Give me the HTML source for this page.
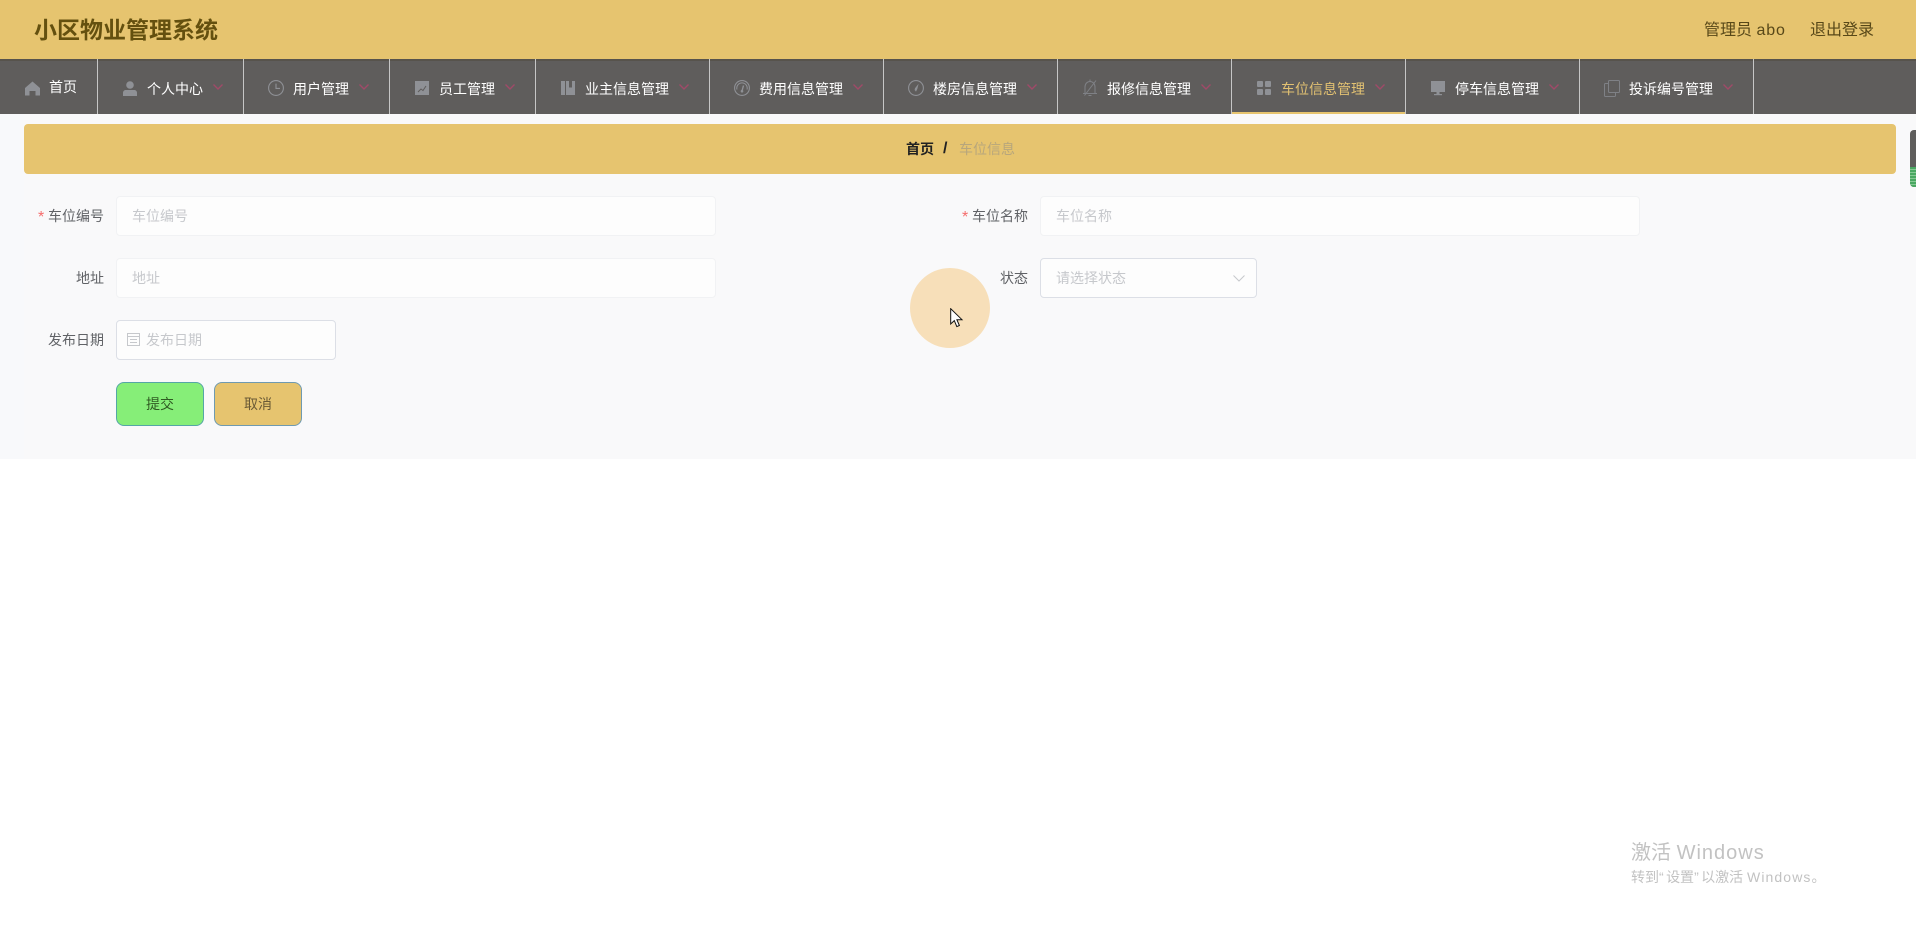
<!DOCTYPE html>
<html lang="zh-CN">
<head>
<meta charset="utf-8">
<title>小区物业管理系统</title>
<style>
html,body{margin:0;padding:0;width:1916px;height:936px;overflow:hidden;background:#fff;}
body{position:relative;font-family:"Liberation Sans","Noto Sans CJK SC",sans-serif;}
.a{position:absolute;white-space:nowrap;}
.t{position:absolute;white-space:nowrap;line-height:20px;height:20px;font-size:14px;}
.sep{position:absolute;top:59px;width:1px;height:55px;background:#c6c6c6;}
.nt{position:absolute;top:79px;white-space:nowrap;font-size:14px;line-height:20px;color:#fff;}
.ic{position:absolute;}
.chev{position:absolute;top:84px;width:10px;height:6px;}
.lab{color:#606266;text-align:right;}
.ph{color:#c6c8cc;}
.box{position:absolute;box-sizing:border-box;background:#fdfdfd;border-radius:4px;}
.star{position:absolute;white-space:nowrap;color:#f56c6c;font-size:16px;line-height:20px;height:20px;}
</style>
</head>
<body>
<!-- page backgrounds -->
<div class="a" style="left:0;top:114px;width:1916px;height:345px;background:#f9f9fa;"></div>
<div class="a" style="left:0;top:114px;width:24px;height:345px;background:#f8f9fb;"></div>

<!-- header -->
<div class="a" style="left:0;top:0;width:1916px;height:59px;background:#e6c46f;"></div>
<div class="a" style="left:34px;top:14px;font-size:23px;line-height:32px;font-weight:bold;color:#64500f;">小区物业管理系统</div>
<div class="a" style="left:1704px;top:20px;font-size:16px;line-height:22px;color:#584818;">管理员 <span style="letter-spacing:.9px">abo</span></div>
<div class="a" style="left:1810px;top:20px;font-size:16px;line-height:22px;color:#584818;">退出登录</div>

<!-- nav -->
<div class="a" style="left:0;top:59px;width:1916px;height:55px;background:#5f5d5c;"></div>
<div class="a" style="left:0;top:59px;width:1916px;height:2px;background:#57534c;"></div>
<div class="a" style="left:1232px;top:112px;width:174px;height:2px;background:#e6c46f;"></div>

<div class="sep" style="left:97px"></div>
<div class="sep" style="left:243px"></div>
<div class="sep" style="left:389px"></div>
<div class="sep" style="left:535px"></div>
<div class="sep" style="left:709px"></div>
<div class="sep" style="left:883px"></div>
<div class="sep" style="left:1057px"></div>
<div class="sep" style="left:1231px"></div>
<div class="sep" style="left:1405px"></div>
<div class="sep" style="left:1579px"></div>
<div class="sep" style="left:1753px"></div>

<!-- home -->
<svg class="ic" style="left:25px;top:81px" width="15" height="15" viewBox="0 0 15 15"><path d="M7.5 0.5L15 7v7.5h-4.500V10h-6v4.500H0V7z" fill="#8f9196"/></svg>
<div class="nt" style="left:49px;top:77px">首页</div>

<!-- user -->
<svg class="ic" style="left:122px;top:81px" width="16" height="15" viewBox="0 0 16 15"><circle cx="8" cy="4" r="3.800" fill="#8f9196"/><path d="M1 15v-3.200C1 10 2.400 9 4 9h8c1.600 0 3 1 3 2.800V15z" fill="#8f9196"/></svg>
<div class="nt" style="left:147px">个人中心</div>
<svg class="chev" style="left:213px" viewBox="0 0 10 6"><path d="M0.500 0.500L5 5l4.500-4.500" fill="none" stroke="#a04a68" stroke-width="1.400"/></svg>

<!-- clock -->
<svg class="ic" style="left:268px;top:80px" width="16" height="16" viewBox="0 0 16 16"><circle cx="8" cy="8" r="7.400" fill="none" stroke="#8f9196" stroke-width="1.100"/><path d="M8 3.600V8.400h4" fill="none" stroke="#8f9196" stroke-width="1.100"/></svg>
<div class="nt" style="left:293px">用户管理</div>
<svg class="chev" style="left:359px" viewBox="0 0 10 6"><path d="M0.500 0.500L5 5l4.500-4.500" fill="none" stroke="#a04a68" stroke-width="1.400"/></svg>

<!-- data line -->
<svg class="ic" style="left:415px;top:81px" width="14" height="14" viewBox="0 0 14 14"><rect width="14" height="14" fill="#8f9196"/><path d="M3 11l3-3 2 1.500L11 5" fill="none" stroke="#5f5d5c" stroke-width="1"/></svg>
<div class="nt" style="left:439px">员工管理</div>
<svg class="chev" style="left:505px" viewBox="0 0 10 6"><path d="M0.500 0.500L5 5l4.500-4.500" fill="none" stroke="#a04a68" stroke-width="1.400"/></svg>

<!-- notebook -->
<svg class="ic" style="left:561px;top:81px" width="14" height="14" viewBox="0 0 14 14"><path d="M0 0h4v14H0zM5 0h3v6.500h3V0h3v14H5z" fill="#8f9196"/></svg>
<div class="nt" style="left:585px">业主信息管理</div>
<svg class="chev" style="left:679px" viewBox="0 0 10 6"><path d="M0.500 0.500L5 5l4.500-4.500" fill="none" stroke="#a04a68" stroke-width="1.400"/></svg>

<!-- gauge -->
<svg class="ic" style="left:734px;top:80px" width="16" height="16" viewBox="0 0 16 16"><circle cx="8" cy="8" r="7.400" fill="none" stroke="#8f9196" stroke-width="1.100"/><path d="M3 9.500A5.200 5.200 0 1 1 13 9.500" fill="none" stroke="#8f9196" stroke-width="1"/><path d="M9.500 5.500L8 11" stroke="#8f9196" stroke-width="1.400"/><circle cx="8" cy="11.200" r="1.300" fill="#8f9196"/></svg>
<div class="nt" style="left:759px">费用信息管理</div>
<svg class="chev" style="left:853px" viewBox="0 0 10 6"><path d="M0.500 0.500L5 5l4.500-4.500" fill="none" stroke="#a04a68" stroke-width="1.400"/></svg>

<!-- compass -->
<svg class="ic" style="left:908px;top:80px" width="16" height="16" viewBox="0 0 16 16"><circle cx="8" cy="8" r="7.400" fill="none" stroke="#8f9196" stroke-width="1.100"/><path d="M10.600 3.800L9.300 9 7 8.200z M7 8.200L9.300 9 8 11.600 6.600 10z" fill="#8f9196"/></svg>
<div class="nt" style="left:933px">楼房信息管理</div>
<svg class="chev" style="left:1027px" viewBox="0 0 10 6"><path d="M0.500 0.500L5 5l4.500-4.500" fill="none" stroke="#a04a68" stroke-width="1.400"/></svg>

<!-- bell off -->
<svg class="ic" style="left:1082px;top:79px" width="16" height="18" viewBox="0 0 16 18"><path d="M1 14.500h14M3 14.500V8c0-3 2-5.500 5-5.500S13 5 13 8v6.500M8 0.500v2M6.500 16.500h3M14 1.500L2.500 16.500" fill="none" stroke="#7f8186" stroke-width="1"/></svg>
<div class="nt" style="left:1107px">报修信息管理</div>
<svg class="chev" style="left:1201px" viewBox="0 0 10 6"><path d="M0.500 0.500L5 5l4.500-4.500" fill="none" stroke="#a04a68" stroke-width="1.400"/></svg>

<!-- menu active -->
<svg class="ic" style="left:1257px;top:81px" width="14" height="14" viewBox="0 0 14 14"><rect width="6" height="6" rx="1" fill="#8f9196"/><rect x="8" width="6" height="6" rx="1" fill="#8f9196"/><rect y="8" width="6" height="6" rx="1" fill="#8f9196"/><rect x="8" y="8" width="6" height="6" rx="1" fill="#8f9196"/></svg>
<div class="nt" style="left:1281px;color:#e2c172">车位信息管理</div>
<svg class="chev" style="left:1375px" viewBox="0 0 10 6"><path d="M0.500 0.500L5 5l4.500-4.500" fill="none" stroke="#a04a68" stroke-width="1.400"/></svg>

<!-- monitor -->
<svg class="ic" style="left:1431px;top:81px" width="14" height="15" viewBox="0 0 14 15"><rect width="14" height="11" fill="#8f9196"/><rect x="5.500" y="11" width="3" height="2" fill="#8f9196"/><rect x="3" y="13" width="8" height="1.200" fill="#8f9196"/></svg>
<div class="nt" style="left:1455px">停车信息管理</div>
<svg class="chev" style="left:1549px" viewBox="0 0 10 6"><path d="M0.500 0.500L5 5l4.500-4.500" fill="none" stroke="#a04a68" stroke-width="1.400"/></svg>

<!-- copy -->
<svg class="ic" style="left:1604px;top:80px" width="16" height="17" viewBox="0 0 16 17"><rect x="4.500" y="0.500" width="11" height="12" rx="1" fill="none" stroke="#7f8186" stroke-width="1"/><path d="M4.500 3.500H1.500a1 1 0 0 0-1 1V15.500a1 1 0 0 0 1 1h9a1 1 0 0 0 1-1V12.500" fill="none" stroke="#7f8186" stroke-width="1"/></svg>
<div class="nt" style="left:1629px">投诉编号管理</div>
<svg class="chev" style="left:1723px" viewBox="0 0 10 6"><path d="M0.500 0.500L5 5l4.500-4.500" fill="none" stroke="#a04a68" stroke-width="1.400"/></svg>

<!-- breadcrumb -->
<div class="a" style="left:24px;top:124px;width:1872px;height:50px;background:#e6c46f;border-radius:4px;"></div>
<div class="t" style="left:906px;top:139px;font-weight:bold;color:#222;">首页</div>
<div class="t" style="left:943px;top:139px;font-weight:bold;font-size:16px;color:#222;">/</div>
<div class="t" style="left:959px;top:139px;color:#b7a67c;">车位信息</div>

<!-- side widget -->
<div class="a" style="left:1910px;top:130px;width:6px;height:57px;border-radius:4px 0 0 4px;overflow:hidden;background:#5f5e5d;"><div style="position:absolute;left:0;top:37px;width:6px;height:20px;background:repeating-linear-gradient(#4aa862 0 2px,#86c994 2px 3px);"></div></div>

<!-- row 1 -->
<div class="star" style="left:38px;top:208px;">*</div>
<div class="t lab" style="left:48px;top:206px;">车位编号</div>
<div class="box" style="left:116px;top:196px;width:600px;height:40px;border:1px solid #f1f2f4;"></div>
<div class="t ph" style="left:132px;top:206px;">车位编号</div>

<div class="star" style="left:962px;top:208px;">*</div>
<div class="t lab" style="left:972px;top:206px;">车位名称</div>
<div class="box" style="left:1040px;top:196px;width:600px;height:40px;border:1px solid #f1f2f4;"></div>
<div class="t ph" style="left:1056px;top:206px;">车位名称</div>

<!-- row 2 -->
<div class="t lab" style="left:76px;top:268px;">地址</div>
<div class="box" style="left:116px;top:258px;width:600px;height:40px;border:1px solid #f1f2f4;"></div>
<div class="t ph" style="left:132px;top:268px;">地址</div>

<div class="t lab" style="left:1000px;top:268px;">状态</div>
<div class="box" style="left:1040px;top:258px;width:217px;height:40px;border:1px solid #dcdfe6;"></div>
<div class="t ph" style="left:1056px;top:268px;">请选择状态</div>
<svg class="ic" style="left:1233px;top:275px" width="12" height="7" viewBox="0 0 12 7"><path d="M0.500 0.500L6 6l5.500-5.500" fill="none" stroke="#c6c8cc" stroke-width="1"/></svg>

<!-- row 3 -->
<div class="t lab" style="left:48px;top:330px;">发布日期</div>
<div class="box" style="left:116px;top:320px;width:220px;height:40px;border:1px solid #dcdfe6;"></div>
<svg class="ic" style="left:127px;top:333px" width="13" height="13" viewBox="0 0 13 13"><rect x="0.500" y="0.500" width="12" height="12" fill="none" stroke="#c6c8cc" stroke-width="1"/><path d="M0.500 3.500h12M3 6.500h7M3 9.500h7" fill="none" stroke="#c6c8cc" stroke-width="1"/></svg>
<div class="t ph" style="left:146px;top:330px;">发布日期</div>

<!-- buttons -->
<div class="a" style="left:116px;top:382px;width:88px;height:44px;box-sizing:border-box;background:#86ee78;border:1px solid #55a6a6;border-radius:8px;"></div>
<div class="t" style="left:146px;top:394px;color:#2f5a22;">提交</div>
<div class="a" style="left:214px;top:382px;width:88px;height:44px;box-sizing:border-box;background:#e6c46f;border:1px solid #6f9ab0;border-radius:8px;"></div>
<div class="t" style="left:244px;top:394px;color:#6a5a36;">取消</div>

<!-- circle & cursor -->
<div class="a" style="left:910px;top:268px;width:80px;height:80px;border-radius:50%;background:#f7dfb9;"></div>
<svg class="ic" style="left:950px;top:308px" width="14" height="20" viewBox="0 0 14 20"><path d="M0.700 0.700V16l3.600-3.400 2.500 6 2.600-1.100-2.500-5.800H12z" fill="#fff" stroke="#111" stroke-width="1"/></svg>

<!-- watermark -->
<div class="a" style="left:1631px;top:839px;font-size:20px;line-height:28px;color:#c2c2c2;">激活 <span style="letter-spacing:1px">Windows</span></div>
<div class="a" style="left:1631px;top:867px;font-size:14px;line-height:20px;color:#c2c2c2;">转到<span style="letter-spacing:2.400px">“</span>设置<span style="letter-spacing:2.400px">”</span>以激活 <span style="letter-spacing:1.100px">Windows</span>。</div>
</body>
</html>
